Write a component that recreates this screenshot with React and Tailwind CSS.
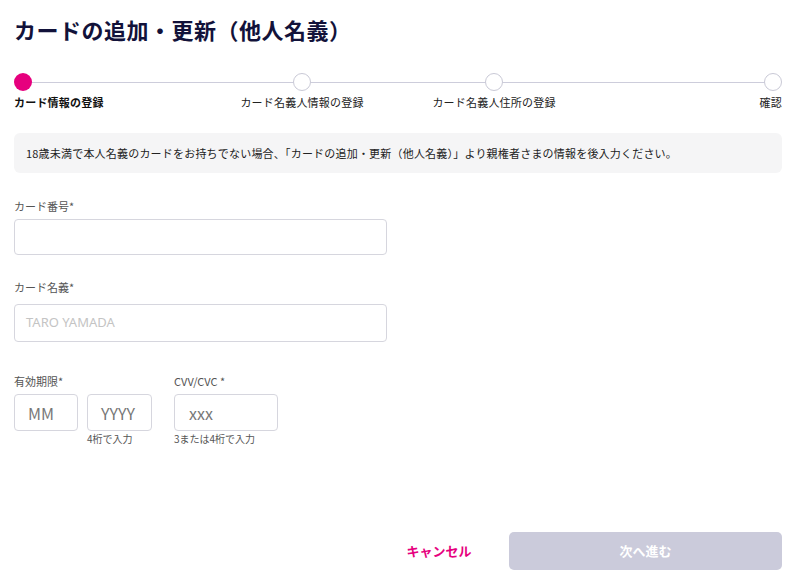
import React from "react";

const font = { fontFamily: '"Noto Sans CJK JP", "Noto Sans", sans-serif' };

function Step({ label, active, align }) {
  const alignCls =
    align === "start" ? "items-start" : align === "end" ? "items-end" : "items-center";
  return (
    <div className={`relative z-10 flex flex-col ${alignCls}`}>
      <div
        className={
          active
            ? "h-[18px] w-[18px] rounded-full bg-[#e6007e]"
            : "h-[18px] w-[18px] rounded-full border border-[#c9c9d6] bg-white"
        }
      />
      <div
        className={`mt-[3px] whitespace-nowrap text-[11px] leading-[16px] tracking-[0.2px] ${
          active ? "font-bold text-[#111]" : "text-[#222]"
        }`}
      >
        {label}
      </div>
    </div>
  );
}

export default function App() {
  return (
    <div className="min-h-[588px] bg-white pl-[14px] pr-[18px]" style={font}>
      <h1 className="pt-[14px] text-[22px] font-bold leading-[30px] tracking-[0.5px] text-[#12123a]">
        カードの追加・更新（他人名義）
      </h1>

      <div className="relative mt-[29px] grid grid-cols-4">
        <div className="absolute left-[9px] right-[9px] top-[9px] h-px bg-[#cdcddb]" />
        <Step label="カード情報の登録" active align="start" />
        <Step label="カード名義人情報の登録" />
        <Step label="カード名義人住所の登録" />
        <Step label="確認" align="end" />
      </div>

      <div className="mt-[23px] flex h-[40px] items-center rounded-[6px] bg-[#f5f5f6] px-[12px] text-[11px] tracking-[0.2px] text-[#222]">
        18歳未満で本人名義のカードをお持ちでない場合、「カードの追加・更新（他人名義）」より親権者さまの情報を後入力ください。
      </div>

      <div className="mt-[25px] text-[11px] leading-[16px] text-[#555]">カード番号*</div>
      <div className="mt-[5px] h-[36px] w-[373px] rounded-[4px] border border-[#d6d6de] bg-white" />

      <div className="mt-[24px] text-[11px] leading-[16px] text-[#555]">カード名義*</div>
      <div
        className="mt-[9px] flex h-[38px] w-[373px] items-center rounded-[4px] border border-[#d6d6de] bg-white px-[11px] text-[13px] text-[#c4c4c4]"
        style={{ fontFamily: '"Noto Sans", "Noto Sans CJK JP", sans-serif' }}
      >
        TARO YAMADA
      </div>

      <div className="mt-[31px] flex gap-[22px]">
        <div>
          <div className="text-[11px] leading-[16px] text-[#555]">有効期限*</div>
          <div className="mt-[5px] flex gap-[9px]">
            <div className="flex h-[37px] w-[64px] items-center rounded-[4px] border border-[#d6d6de] px-[13px] text-[16px] text-[#777]">
              MM
            </div>
            <div>
              <div className="flex h-[37px] w-[65px] items-center rounded-[4px] border border-[#d6d6de] px-[13px] text-[16px] text-[#777]">
                YYYY
              </div>
              <div className="mt-[1px] text-[10px] leading-[14px] text-[#555]">4桁で入力</div>
            </div>
          </div>
        </div>
        <div>
          <div className="text-[11px] leading-[16px] text-[#555]">CVV/CVC *</div>
          <div className="mt-[5px] flex h-[37px] w-[104px] items-center rounded-[4px] border border-[#d6d6de] px-[14px] text-[16px] text-[#777]">
            xxx
          </div>
          <div className="mt-[1px] text-[10px] leading-[14px] text-[#555]">3または4桁で入力</div>
        </div>
      </div>

      <div className="mt-[86px] flex justify-end gap-[10px]">
        <button className="flex h-[38px] w-[120px] items-center justify-center text-[13px] font-bold text-[#e6007e]">
          キャンセル
        </button>
        <button className="flex h-[38px] w-[273px] items-center justify-center rounded-[5px] bg-[#cbcbdb] text-[13px] font-bold text-white">
          次へ進む
        </button>
      </div>
    </div>
  );
}
